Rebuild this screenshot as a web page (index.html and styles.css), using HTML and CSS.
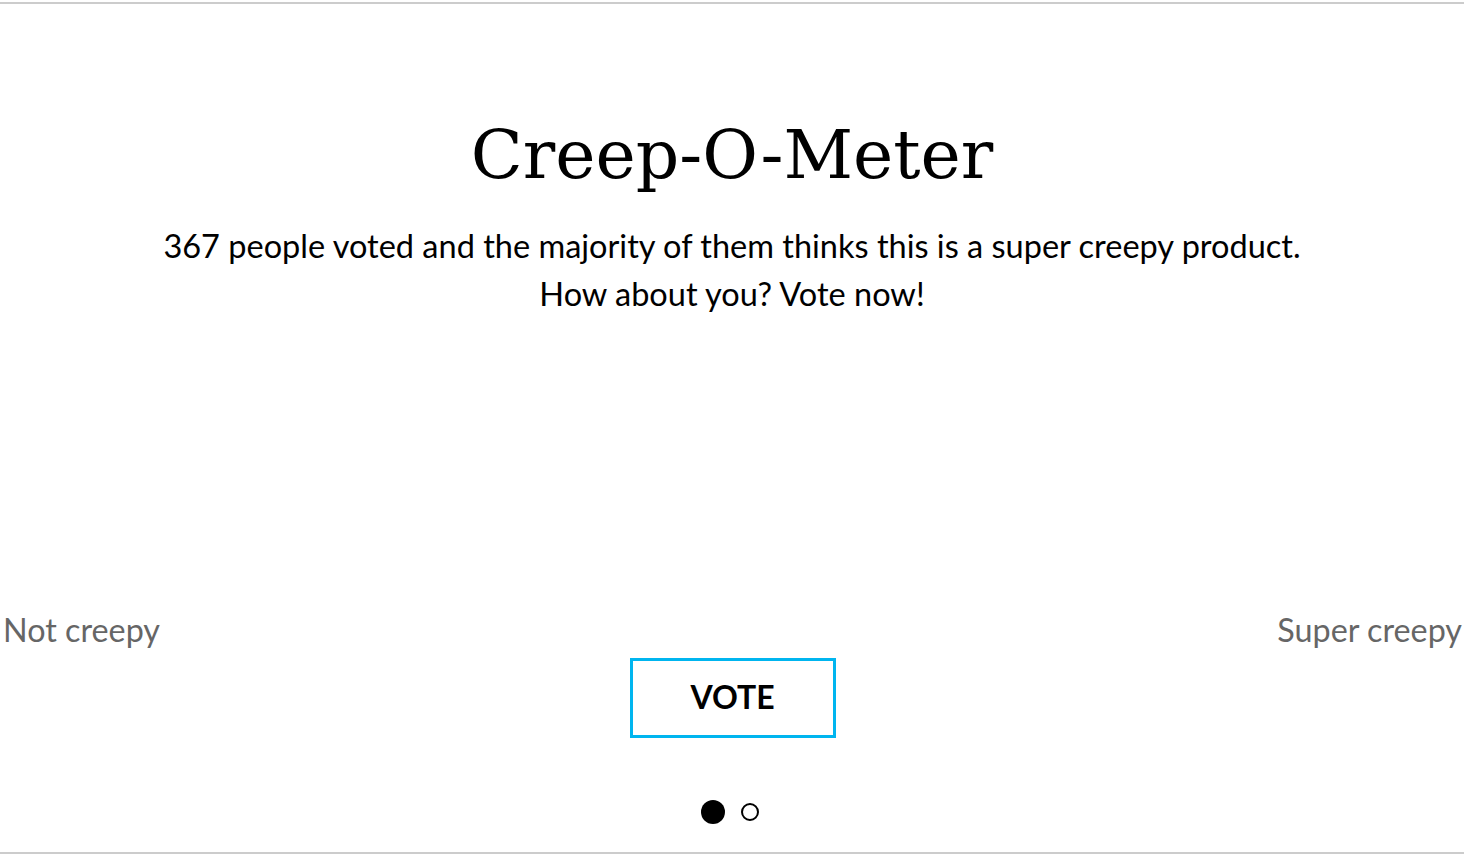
FILE: index.html
```html
<!DOCTYPE html>
<html>
<head>
<meta charset="utf-8">
<link rel="stylesheet" href="styles.css">
</head>
<body>
<section class="meter">
  <h1 class="title">Creep-O-Meter</h1>
  <p class="summary">367 people voted and the majority of them thinks this is a super creepy product.<br>How about you? Vote now!</p>
  <div class="stage"></div>
  <div class="labels">
    <span class="label">Not creepy</span>
    <span class="label">Super creepy</span>
  </div>
  <div class="actions">
    <button class="vote">VOTE</button>
  </div>
  <div class="dots">
    <span class="dot dot-active"></span>
    <span class="dot"></span>
  </div>
</section>
</body>
</html>
```

FILE: styles.css
```css
html, body {
  margin: 0;
  padding: 0;
  background: #fff;
}
.meter {
  margin-top: 2px;
  height: 852px;
  box-sizing: border-box;
  border-top: 2px solid #cccccc;
  border-bottom: 2px solid #cccccc;
  display: flex;
  flex-direction: column;
  align-items: stretch;
  font-family: "Lato", "Noto Sans", sans-serif;
  color: #000;
}
.title {
  margin: 103px 0 0;
  text-align: center;
  font-family: "DejaVu Serif", serif;
  font-weight: normal;
  font-size: 68px;
  line-height: 96px;
}
.summary {
  margin: 19px 0 0;
  text-align: center;
  font-size: 32.5px;
  line-height: 48px;
}
.stage {
  flex: 1;
}
.labels {
  display: flex;
  justify-content: space-between;
  padding: 0 2px 0 3px;
  color: #666;
  font-size: 32.3px;
  line-height: 40px;
}
.actions {
  display: flex;
  justify-content: center;
  margin-top: 8px;
}
.vote {
  width: 206px;
  height: 80px;
  box-sizing: border-box;
  border: 3px solid #00b5ef;
  background: #fff;
  font-family: "Lato", sans-serif;
  font-weight: bold;
  font-size: 32px;
  color: #000;
  padding: 0 0 3px;
  margin-left: 1px;
}
.dots {
  display: flex;
  justify-content: center;
  align-items: center;
  gap: 16px;
  height: 28px;
  padding-right: 4px;
  margin: 60px 0 26px;
}
.dot {
  width: 14px;
  height: 14px;
  border: 2px solid #000;
  border-radius: 50%;
}
.dot-active {
  width: 24px;
  height: 24px;
  border: 0;
  background: #000;
}
```
